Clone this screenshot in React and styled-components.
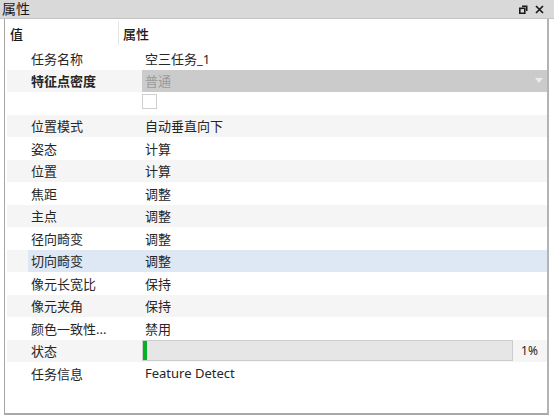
import React from "react";
import styled, { createGlobalStyle } from "styled-components";

const GlobalStyle = createGlobalStyle`
  *, *::before, *::after {
    box-sizing: border-box;
  }
  body {
    margin: 0;
    background: #ffffff;
    font-family: "Noto Sans", "Noto Sans CJK SC", sans-serif;
  }
`;

const Window = styled.div`
  width: 554px;
  height: 417px;
  display: flex;
  flex-direction: column;
  background: #ffffff;
  color: #262626;
  font-size: 13px;
  overflow: hidden;
`;

const TitleBar = styled.div`
  height: 19px;
  display: flex;
  align-items: center;
  justify-content: space-between;
  padding: 0 10px 0 2px;
  background: #d9d9d9;
  border-bottom: 1px solid #c4c4c4;
  font-size: 14px;
  color: #1a1a1a;
`;

const TitleText = styled.span`
  line-height: 18px;
`;

const TitleButtons = styled.div`
  display: flex;
  align-items: center;
  gap: 7px;
`;

const Panel = styled.div`
  flex: 1;
  margin: 0 5px 2px 4px;
  border-left: 1px solid #a6a6a6;
  border-right: 2px solid #b4b4b4;
  border-bottom: 2px solid #a8a8a8;
  display: flex;
  flex-direction: column;
`;

const Header = styled.div`
  height: 28px;
  display: flex;
  align-items: center;
`;

const HeaderCell = styled.div`
  height: 24px;
  display: flex;
  align-items: center;
  padding-left: ${(p) => p.$pad}px;
  width: ${(p) => (p.$width ? `${p.$width}px` : "auto")};
  border-right: ${(p) => (p.$divider ? "1px solid #e6e6e6" : "none")};
  font-weight: 500;
  color: #1a1a1a;
`;

const Rows = styled.div`
  margin-left: 2px;
  display: flex;
  flex-direction: column;
`;

const Row = styled.div`
  height: 22.5px;
  display: flex;
  align-items: stretch;
  background: ${(p) => (p.$alt ? "#f5f5f5" : "#ffffff")};
`;

const Indent = styled.div`
  width: 21px;
  flex-shrink: 0;
`;

const Label = styled.div`
  width: 114px;
  flex-shrink: 0;
  padding-left: 3px;
  display: flex;
  align-items: center;
  font-weight: ${(p) => (p.$bold ? 700 : 400)};
  background: ${(p) => (p.$selected ? "#dde8f4" : "transparent")};
  white-space: nowrap;
`;

const Value = styled.div`
  flex: 1;
  display: flex;
  align-items: ${(p) => (p.$top ? "flex-start" : "center")};
  padding-left: ${(p) => (p.$flush ? 0 : 3)}px;
  background: ${(p) => (p.$selected ? "#dde8f4" : "transparent")};
`;

const ComboBox = styled.div`
  flex: 1;
  display: flex;
  align-items: center;
  justify-content: space-between;
  background: #cbcbcb;
  color: #9a9a9a;
  padding: 0 4px 0 3px;
`;

const ComboArrow = styled.span`
  width: 0;
  height: 0;
  border-left: 4px solid transparent;
  border-right: 4px solid transparent;
  border-top: 5px solid #ececec;
`;

const CheckBox = styled.div`
  width: 15px;
  height: 15px;
  margin-top: 2px;
  border: 1px solid #cfcfcf;
  background: #ffffff;
`;

const ProgressCell = styled.div`
  flex: 1;
  display: flex;
  align-items: center;
`;

const ProgressTrack = styled.div`
  width: 371px;
  height: 21px;
  border: 1px solid #cdcdcd;
  background: #e6e6e6;
  display: flex;
`;

const ProgressFill = styled.div`
  height: 100%;
  background: #06b025;
`;

const ProgressText = styled.span`
  margin-left: 8px;
  font-size: 12px;
`;

const FloatIcon = () => (
  <svg width="9" height="9" viewBox="0 0 9 9">
    <path d="M3 0.5h5.5v5.5H7V2H3z" fill="#1a1a1a" />
    <rect x="0.8" y="3.3" width="5" height="5" fill="none" stroke="#1a1a1a" strokeWidth="1.6" />
  </svg>
);

const CloseIcon = () => (
  <svg width="9" height="9" viewBox="0 0 9 9">
    <path d="M1 1L8 8M8 1L1 8" stroke="#1a1a1a" strokeWidth="1.7" />
  </svg>
);

const plainRows = [
  ["位置模式", "自动垂直向下"],
  ["姿态", "计算"],
  ["位置", "计算"],
  ["焦距", "调整"],
  ["主点", "调整"],
  ["径向畸变", "调整"],
  ["切向畸变", "调整", true],
  ["像元长宽比", "保持"],
  ["像元夹角", "保持"],
  ["颜色一致性...", "禁用"],
];

const progress = 1;

export default function App() {
  return (
    <>
      <GlobalStyle />
      <Window>
        <TitleBar>
          <TitleText>属性</TitleText>
          <TitleButtons>
            <FloatIcon />
            <CloseIcon />
          </TitleButtons>
        </TitleBar>
        <Panel>
          <Header>
            <HeaderCell $pad={5} $width={114} $divider>
              值
            </HeaderCell>
            <HeaderCell $pad={4}>属性</HeaderCell>
          </Header>
          <Rows>
            <Row>
              <Indent />
              <Label>任务名称</Label>
              <Value>空三任务_1</Value>
            </Row>
            <Row $alt>
              <Indent />
              <Label $bold>特征点密度</Label>
              <ComboBox>
                普通
                <ComboArrow />
              </ComboBox>
            </Row>
            <Row>
              <Indent />
              <Label />
              <Value $flush $top>
                <CheckBox />
              </Value>
            </Row>
            {plainRows.map(([label, value, selected], i) => (
              <Row key={label} $alt={i % 2 === 0}>
                <Indent />
                <Label $selected={selected}>{label}</Label>
                <Value $selected={selected}>{value}</Value>
              </Row>
            ))}
            <Row $alt>
              <Indent />
              <Label>状态</Label>
              <ProgressCell>
                <ProgressTrack>
                  <ProgressFill style={{ width: `${Math.max(progress, 1)}%` }} />
                </ProgressTrack>
                <ProgressText>{progress}%</ProgressText>
              </ProgressCell>
            </Row>
            <Row>
              <Indent />
              <Label>任务信息</Label>
              <Value>Feature Detect</Value>
            </Row>
          </Rows>
        </Panel>
      </Window>
    </>
  );
}
